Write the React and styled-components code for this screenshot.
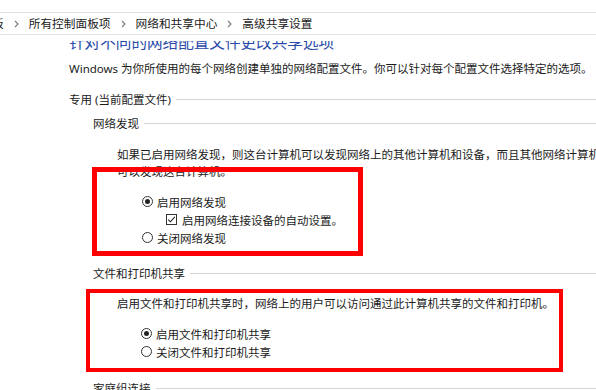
import React from "react";
import styled, { createGlobalStyle } from "styled-components";

const Global = createGlobalStyle`
  html, body { margin: 0; padding: 0; background: #fff; }
  body {
    font-family: "Noto Sans", "Noto Sans CJK SC", sans-serif;
    color: #1b1b1b;
    -webkit-font-smoothing: antialiased;
  }
`;

const Page = styled.div`
  position: relative;
  width: 596px;
  height: 390px;
  overflow: hidden;
  background: #fff;
`;

const Header = styled.div`
  padding-top: 12px;
`;

const Breadcrumb = styled.nav`
  display: flex;
  align-items: center;
  gap: 10px;
  height: 23px;
  box-sizing: border-box;
  border-top: 1px solid #e1e1e1;
  border-bottom: 1px solid #e1e1e1;
  margin-left: -8px;
  font-size: 11.7px;
  white-space: nowrap;
  line-height: 21px;
`;

const Crumb = styled.span`
  color: #1b1b1b;
`;

const Chevron = () => (
  <svg width="5" height="8" viewBox="0 0 5 8">
    <path d="M1 1 L4 4 L1 7" fill="none" stroke="#7a7a7a" strokeWidth="1.1" />
  </svg>
);

const Viewport = styled.div`
  height: 349px;
  margin-top: 6px;
  overflow: hidden;
  padding-left: 69px;
`;

const Title = styled.h1`
  margin: -9px 0 0;
  font-size: 15.6px;
  font-weight: 400;
  line-height: 20px;
  color: #2a4aa9;
  white-space: nowrap;
`;

const Text = styled.p`
  margin: ${(p) => p.$top || 0}px 0 0;
  font-size: ${(p) => p.$size || 11.5}px;
  line-height: 17px;
  white-space: nowrap;
`;

const RuleHeading = styled.div`
  display: flex;
  align-items: center;
  gap: 5px;
  margin-top: ${(p) => p.$top}px;
  font-size: 11.5px;
  line-height: 17px;
  white-space: nowrap;
  &::after {
    content: "";
    flex: 1;
    height: 1px;
    background: #d7d7d7;
    margin-right: -80px;
  }
`;

const Section = styled.section`
  padding-left: 24px;
`;

const Body = styled.div`
  padding-left: 24px;
`;

const Options = styled.div`
  display: flex;
  flex-direction: column;
  margin-top: 12.5px;
  padding-left: ${(p) => p.$indent || 25}px;
`;

const Row = styled.label`
  display: flex;
  align-items: center;
  gap: ${(p) => p.$gap || 4}px;
  height: ${(p) => p.$h || 18}px;
  font-size: 11.5px;
  white-space: nowrap;
  padding-left: ${(p) => p.$indent || 0}px;
`;

const RadioDot = styled.span`
  width: 11px;
  height: 11px;
  box-sizing: border-box;
  border: 1px solid #333;
  border-radius: 50%;
  display: flex;
  align-items: center;
  justify-content: center;
  &::after {
    content: "";
    width: 5px;
    height: 5px;
    border-radius: 50%;
    background: ${(p) => (p.$on ? "#222" : "transparent")};
  }
`;

const Check = () => (
  <svg width="11" height="11" viewBox="0 0 11 11">
    <rect x="0.5" y="0.5" width="10" height="10" fill="#fff" stroke="#333" />
    <path d="M2.3 5.6 L4.4 7.8 L8.8 2.9" fill="none" stroke="#222" strokeWidth="1.1" />
  </svg>
);

const Annotation = styled.div`
  position: absolute;
  left: ${(p) => p.$x}px;
  top: ${(p) => p.$y}px;
  width: ${(p) => p.$w}px;
  height: ${(p) => p.$h}px;
  box-sizing: border-box;
  border: ${(p) => p.$b}px solid #ff0000;
  pointer-events: none;
`;

export default function App() {
  return (
    <Page>
      <Global />
      <Header>
        <Breadcrumb>
          <Crumb>板</Crumb>
          <Chevron />
          <Crumb>所有控制面板项</Crumb>
          <Chevron />
          <Crumb>网络和共享中心</Crumb>
          <Chevron />
          <Crumb>高级共享设置</Crumb>
        </Breadcrumb>
      </Header>
      <Viewport>
        <Title>针对不同的网络配置文件更改共享选项</Title>
        <Text $top={8} $size={11.5}>
          Windows 为你所使用的每个网络创建单独的网络配置文件。你可以针对每个配置文件选择特定的选项。
        </Text>
        <RuleHeading $top={14}>专用 (当前配置文件)</RuleHeading>
        <Section>
          <RuleHeading $top={7}>网络发现</RuleHeading>
          <Body>
            <Text $top={14}>
              如果已启用网络发现，则这台计算机可以发现网络上的其他计算机和设备，而且其他网络计算机也
            </Text>
            <Text>可以发现这台计算机。</Text>
            <Options>
              <Row>
                <RadioDot $on />
                启用网络发现
              </Row>
              <Row $indent={24} $gap={5}>
                <Check />
                启用网络连接设备的自动设置。
              </Row>
              <Row>
                <RadioDot />
                关闭网络发现
              </Row>
            </Options>
          </Body>
          <RuleHeading $top={18.5}>文件和打印机共享</RuleHeading>
          <Body>
            <Text $top={13}>
              启用文件和打印机共享时，网络上的用户可以访问通过此计算机共享的文件和打印机。
            </Text>
            <Options $indent={24}>
              <Row>
                <RadioDot $on />
                启用文件和打印机共享
              </Row>
              <Row>
                <RadioDot />
                关闭文件和打印机共享
              </Row>
            </Options>
          </Body>
          <RuleHeading $top={19.5}>家庭组连接</RuleHeading>
        </Section>
      </Viewport>
      <Annotation $x={92} $y={167} $w={271} $h={89} $b={5} />
      <Annotation $x={86} $y={289} $w={477} $h={83} $b={4} />
    </Page>
  );
}
